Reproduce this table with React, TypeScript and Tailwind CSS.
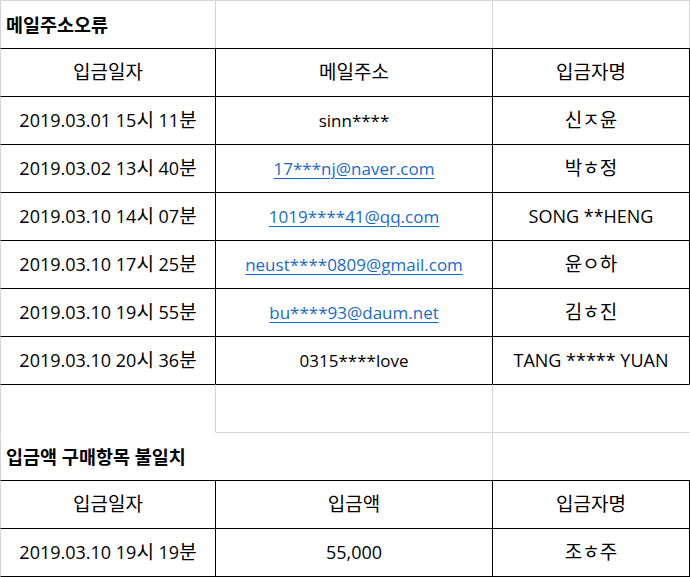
import React from "react";

type Line = "g" | "b" | "w";

const TOP: Record<Line, string> = { g: "border-t-[#d4d4d4]", b: "border-t-black", w: "border-t-white" };
const LEFT: Record<Line, string> = { g: "border-l-[#d4d4d4]", b: "border-l-black", w: "border-l-white" };
const RIGHT: Record<Line, string> = { g: "border-r-[#d4d4d4]", b: "border-r-black", w: "border-r-white" };

type CellProps = {
  top?: Line;
  left?: Line;
  right?: Line;
  bottom?: boolean;
  w: string;
  children?: React.ReactNode;
  className?: string;
};

// one spreadsheet cell: draws its own top / left line, plus right / bottom when asked
const Cell = ({ top = "g", left = "g", right, bottom, w, children, className = "" }: CellProps) => (
  <div
    className={`${w} flex items-center border-t border-l ${TOP[top]} ${LEFT[left]} ${
      right ? `border-r ${RIGHT[right]}` : ""
    } ${bottom ? "border-b border-b-black h-[49px]" : "h-[48px]"} ${className}`}
  >
    {children}
  </div>
);

const C0 = "w-[215px] shrink-0";
const C1 = "w-[277px] shrink-0";
const C2 = "w-[198px] shrink-0";

// hangul runs are drawn a bit larger, like Malgun Gothic next to its latin glyphs
const K = ({ text }: { text: string }) => (
  <span className="whitespace-pre">
    {text.split(/([\uAC00-\uD7A3\u3131-\u318E]+)/).map((part, i) =>
      i % 2 === 1 ? (
        <span key={i} className="text-[19px]">
          {part}
        </span>
      ) : (
        part
      )
    )}
  </span>
);

const Title = ({ text }: { text: string }) => (
  <span className="pl-[5px] font-bold text-[18.5px] whitespace-nowrap relative z-10">{text}</span>
);

const Link = ({ text }: { text: string }) => (
  <span className="text-[#1a6acb] underline underline-offset-[3px] decoration-1">{text}</span>
);

const mailRows: { date: string; mail: React.ReactNode; name: string }[] = [
  { date: "2019.03.01 15시 11분", mail: "sinn****", name: "신ㅈ윤" },
  { date: "2019.03.02 13시 40분", mail: <Link text="17***nj@naver.com" />, name: "박ㅎ정" },
  { date: "2019.03.10 14시 07분", mail: <Link text="1019****41@qq.com" />, name: "SONG **HENG" },
  { date: "2019.03.10 17시 25분", mail: <Link text="neust****0809@gmail.com" />, name: "윤ㅇ하" },
  { date: "2019.03.10 19시 55분", mail: <Link text="bu****93@daum.net" />, name: "김ㅎ진" },
  { date: "2019.03.10 20시 36분", mail: "0315****love", name: "TANG ***** YUAN" },
];

const TableRow = ({ a, b, c, last }: { a: string; b: React.ReactNode; c: string; last?: boolean }) => (
  <div className="flex">
    <Cell w={C0} top="b" left="g" bottom={last} className="justify-center">
      <K text={a} />
    </Cell>
    <Cell w={C1} top="b" left="b" bottom={last} className="justify-center">
      {typeof b === "string" ? <K text={b} /> : <span className="text-[17px]">{b}</span>}
    </Cell>
    <Cell w={C2} top="b" left="b" right="b" bottom={last} className="justify-center">
      <K text={c} />
    </Cell>
  </div>
);

export default function App() {
  return (
    <div
      className="w-[690px] h-[577px] bg-white text-black text-[18px] overflow-hidden"
      style={{ fontFamily: '"Open Sans", "Noto Sans CJK KR", sans-serif' }}
    >
      {/* 메일주소오류 */}
      <div className="flex">
        <Cell w={C0}>
          <Title text="메일주소오류" />
        </Cell>
        <Cell w={C1} />
        <Cell w={C2} right="g" />
      </div>
      <TableRow a="입금일자" b="메일주소" c="입금자명" />
      {mailRows.map((r, i) => (
        <TableRow
          key={i}
          a={r.date}
          b={typeof r.mail === "string" ? <span>{r.mail}</span> : r.mail}
          c={r.name}
        />
      ))}

      {/* empty rows */}
      <div className="flex">
        <Cell w={C0} top="b" />
        <Cell w={C1} top="b" />
        <Cell w={C2} top="b" right="w" />
      </div>
      <div className="flex">
        <Cell w={C0} top="w">
          <Title text="입금액 구매항목 불일치" />
        </Cell>
        <Cell w={C1} left="w" />
        <Cell w={C2} right="w" />
      </div>

      {/* 입금액 구매항목 불일치 */}
      <TableRow a="입금일자" b="입금액" c="입금자명" />
      <TableRow a="2019.03.10 19시 19분" b="55,000" c="조ㅎ주" last />
    </div>
  );
}
